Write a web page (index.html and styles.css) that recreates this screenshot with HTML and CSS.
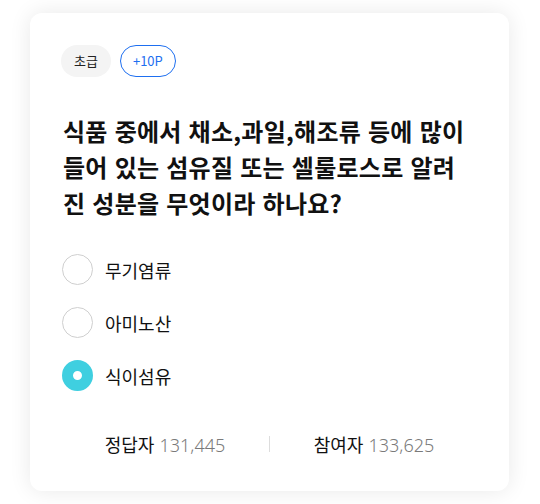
FILE: index.html
```html
<!DOCTYPE html>
<html lang="ko">
<head>
<meta charset="utf-8">
<link rel="stylesheet" href="styles.css">
</head>
<body>
<div class="card">
  <div class="tags">
    <span class="tag tag-level">초급</span>
    <span class="tag tag-point">+10P</span>
  </div>
  <p class="question">식품 중에서 채소,과일,해조류 등에 많이<br>들어 있는 섬유질 또는 셀룰로스로 알려<br>진 성분을 무엇이라 하나요?</p>
  <ul class="options">
    <li class="option"><span class="radio"></span><span class="label">무기염류</span></li>
    <li class="option"><span class="radio"></span><span class="label">아미노산</span></li>
    <li class="option"><span class="radio radio-on"></span><span class="label">식이섬유</span></li>
  </ul>
  <div class="stats">
    <div class="stat"><span class="stat-name">정답자</span> <span class="stat-num">131,445</span></div>
    <span class="divider"></span>
    <div class="stat"><span class="stat-name">참여자</span> <span class="stat-num">133,625</span></div>
  </div>
</div>
</body>
</html>
```

FILE: styles.css
```css
* { box-sizing: border-box; }
html, body { margin: 0; padding: 0; background: #fff; }
body {
  font-family: "Noto Sans CJK KR", "Noto Sans", sans-serif;
  color: #111;
  padding: 13px 31px 13px 30px;
}
.card {
  width: 479px;
  height: 478px;
  background: #fff;
  border-radius: 12px;
  box-shadow: 0 0 22px rgba(0, 0, 0, 0.09);
  padding: 32px 31px 0 31px;
}
.tags { display: flex; gap: 9px; }
.tag {
  height: 32px;
  border-radius: 16px;
  padding: 0 13px;
  font-size: 13px;
  line-height: 32px;
  display: inline-flex;
  align-items: center;
}
.tag-level { background: #f4f4f4; color: #222; }
.tag-point { border: 1px solid #1e6ff0; color: #1e6ff0; padding: 0 12px; }
.question {
  margin: 36px 0 0 2px;
  font-size: 24px;
  font-weight: 700;
  line-height: 36px;
  letter-spacing: 0.25px;
  white-space: nowrap;
  color: #111;
}
.options {
  list-style: none;
  margin: 33px 0 0 1px;
  padding: 0;
  display: flex;
  flex-direction: column;
  gap: 22px;
}
.option { display: flex; align-items: center; gap: 12px; height: 31px; }
.radio {
  width: 31px;
  height: 31px;
  border-radius: 50%;
  border: 1.5px solid #cfcfcf;
  background: #fff;
  flex: none;
}
.radio-on {
  border: 11.5px solid #3fcfe0;
  background: #fff;
}
.label { font-size: 18px; color: #111; }
.stats {
  margin-top: 40px;
  display: flex;
  align-items: center;
}
.stat { flex: 1; text-align: center; font-size: 18px; }
.stat-name { color: #111; }
.stat-num { font-family: "Noto Sans", sans-serif; color: #7a7a7a; font-weight: 300; }
.divider { width: 1px; height: 16px; background: #ddd; flex: none; }
```
